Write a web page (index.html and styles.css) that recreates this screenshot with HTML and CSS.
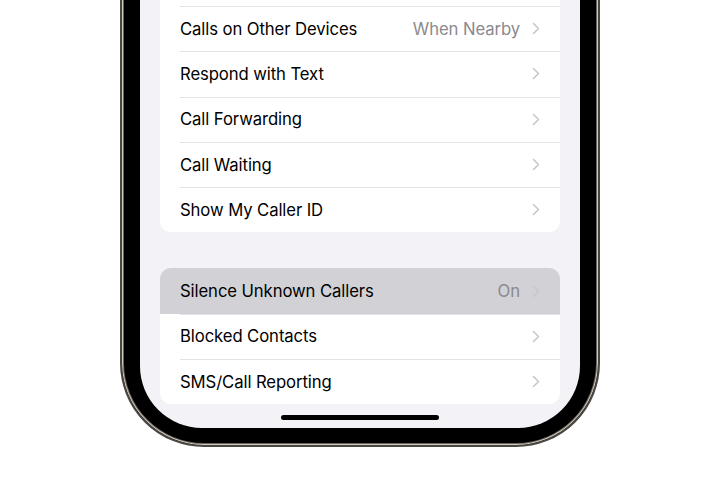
FILE: index.html
```html
<!DOCTYPE html>
<html>
<head>
<meta charset="utf-8">
<link rel="stylesheet" href="styles.css">
</head>
<body>
<div class="stage">
  <div class="phone">
    <div class="screen">
      <div class="card card-top">
        <div class="row sep"><span class="label">Calls on Other Devices</span><span class="value">When Nearby</span><svg class="chev" viewBox="0 0 8 13"><path d="M1.5 1.5 L6.5 6.5 L1.5 11.5"/></svg></div>
        <div class="row sep"><span class="label">Respond with Text</span><svg class="chev" viewBox="0 0 8 13"><path d="M1.5 1.5 L6.5 6.5 L1.5 11.5"/></svg></div>
        <div class="row sep"><span class="label">Call Forwarding</span><svg class="chev" viewBox="0 0 8 13"><path d="M1.5 1.5 L6.5 6.5 L1.5 11.5"/></svg></div>
        <div class="row sep"><span class="label">Call Waiting</span><svg class="chev" viewBox="0 0 8 13"><path d="M1.5 1.5 L6.5 6.5 L1.5 11.5"/></svg></div>
        <div class="row sep"><span class="label">Show My Caller ID</span><svg class="chev" viewBox="0 0 8 13"><path d="M1.5 1.5 L6.5 6.5 L1.5 11.5"/></svg></div>
      </div>
      <div class="card">
        <div class="row active"><span class="label">Silence Unknown Callers</span><span class="value">On</span><svg class="chev" viewBox="0 0 8 13"><path d="M1.5 1.5 L6.5 6.5 L1.5 11.5"/></svg></div>
        <div class="row sep"><span class="label">Blocked Contacts</span><svg class="chev" viewBox="0 0 8 13"><path d="M1.5 1.5 L6.5 6.5 L1.5 11.5"/></svg></div>
        <div class="row sep"><span class="label">SMS/Call Reporting</span><svg class="chev" viewBox="0 0 8 13"><path d="M1.5 1.5 L6.5 6.5 L1.5 11.5"/></svg></div>
      </div>
      <div class="home"></div>
    </div>
  </div>
</div>
</body>
</html>
```
FILE: styles.css
```css
html, body {
  margin: 0;
  padding: 0;
  background: #ffffff;
  width: 720px;
  height: 480px;
  overflow: hidden;
  font-family: "Inter", "Noto Sans", "Liberation Sans", sans-serif;
}
.stage {
  width: 720px;
  height: 480px;
  overflow: hidden;
}
.phone {
  box-sizing: border-box;
  width: 480px;
  height: 567px;
  margin: -120px 0 0 120px;
  background: #000;
  border: 2px solid #4a4641;
  border-radius: 0 0 84px 84px;
  box-shadow: inset 0 0 0 1px #cfc8bd, inset 0 0 0 2px #6a655e;
  padding: 18px;
}
.screen {
  position: relative;
  box-sizing: border-box;
  width: 440px;
  height: 528px;
  background: #f2f2f7;
  border-radius: 0 0 62px 62px;
  overflow: hidden;
  padding: 61px 20px 0 20px;
  display: flex;
  flex-direction: column;
  gap: 36px;
}
.card {
  background: #ffffff;
  border-radius: 11px;
  overflow: hidden;
}
.card-top {
  padding-top: 45px;
}
.row {
  position: relative;
  height: 45.3px;
  display: flex;
  align-items: center;
  padding: 0 20px 0 20px;
  font-size: 16.7px;
  color: #000;
  letter-spacing: -0.1px;
}
.row.sep::before {
  content: "";
  position: absolute;
  left: 20px;
  right: 0;
  top: 0;
  height: 1px;
  background: #e3e3e6;
}
.row.active {
  background: #d1d1d6;
}
.label {
  flex: 1;
}
.value {
  color: #8a8a8e;
  margin-right: 12px;
}
.chev {
  width: 8px;
  height: 13px;
  fill: none;
  stroke: #c7c7cc;
  stroke-width: 1.6;
  stroke-linecap: round;
  stroke-linejoin: round;
}
.home {
  position: absolute;
  left: 141px;
  bottom: 8px;
  width: 158px;
  height: 5px;
  border-radius: 3px;
  background: #000;
}
```
